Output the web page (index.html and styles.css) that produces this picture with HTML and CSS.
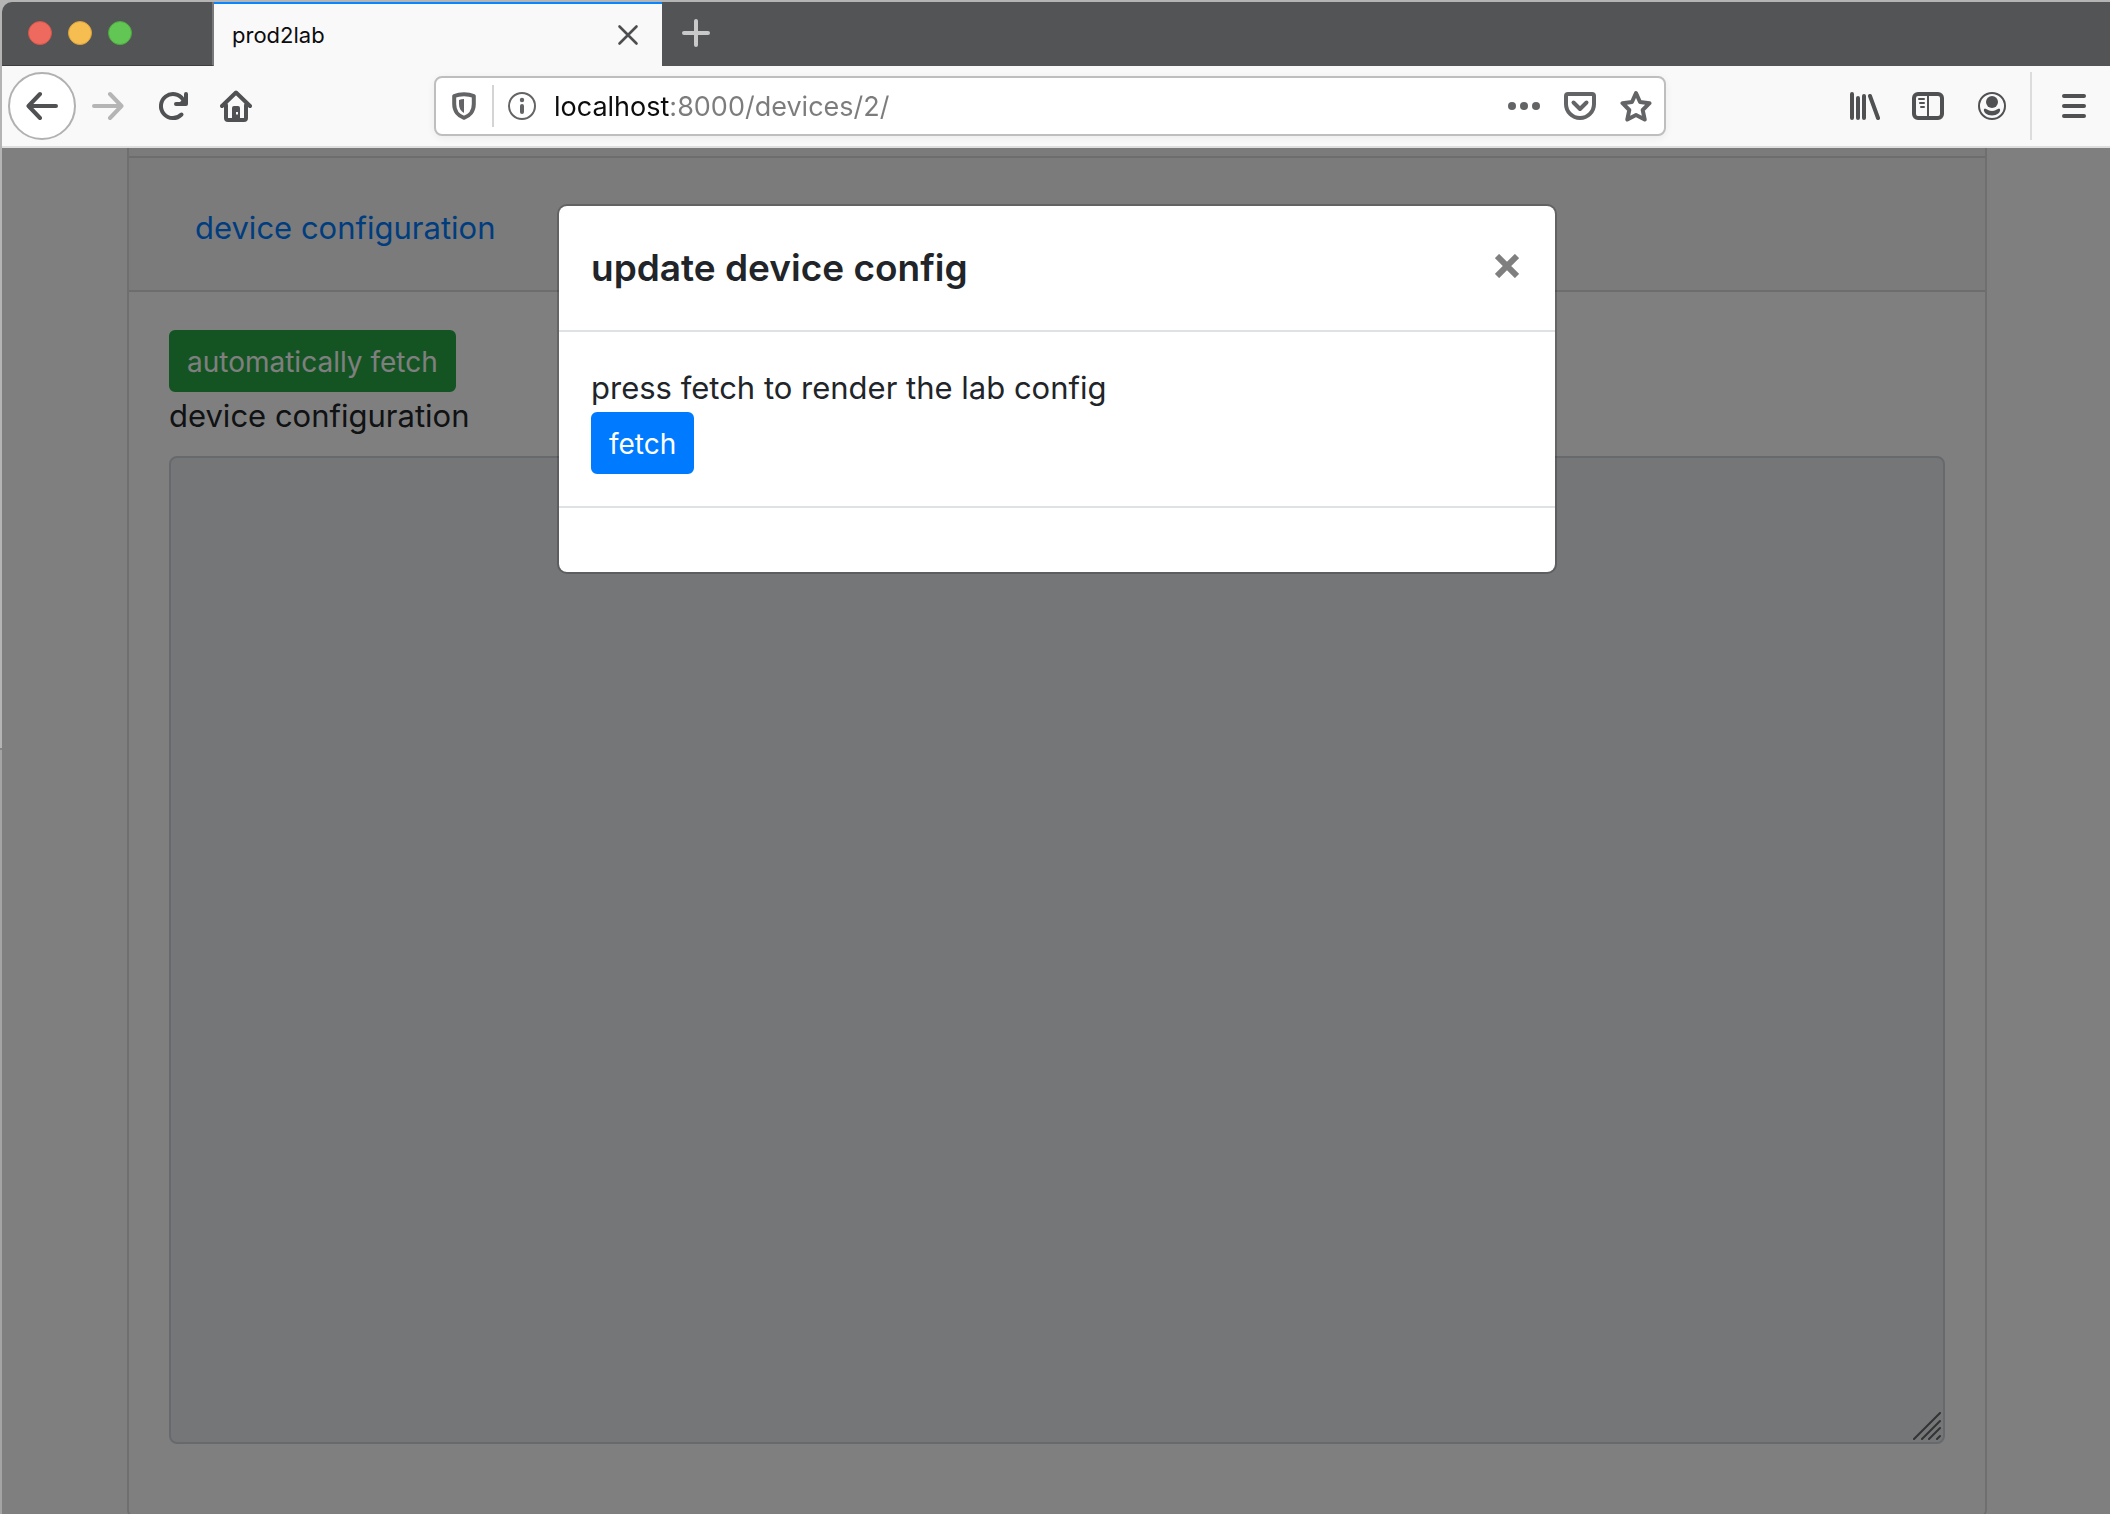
FILE: index.html
```html
<!DOCTYPE html>
<html lang="en">
<head>
<meta charset="utf-8">
<meta name="viewport" content="width=device-width, initial-scale=1">
<title>prod2lab</title>
<link rel="stylesheet" href="styles.css">
</head>
<body>
<div class="window">
  <header class="tabstrip">
    <div class="lights">
      <button class="light light-close" aria-label="Close window"></button>
      <button class="light light-min" aria-label="Minimize window"></button>
      <button class="light light-max" aria-label="Zoom window"></button>
    </div>
    <div class="tab">
      <span class="tab-title">prod2lab</span>
      <button class="icon-btn" aria-label="Close tab">
        <svg width="24" height="24" viewBox="0 0 24 24" fill="none" stroke="#4d4e50" stroke-width="2.6" stroke-linecap="round"><path d="M3.500 3.500l17 17M20.500 3.500l-17 17"/></svg>
      </button>
    </div>
    <button class="icon-btn new-tab" aria-label="New tab">
      <svg width="28" height="28" viewBox="0 0 28 28" fill="none" stroke="#c9c9ca" stroke-width="4" stroke-linecap="round"><path d="M14 2v24M2 14h24"/></svg>
    </button>
  </header>

  <nav class="toolbar">
    <button class="icon-btn back" aria-label="Back">
      <svg width="32" height="32" viewBox="0 0 32 32" fill="none" stroke="#505153" stroke-width="4" stroke-linecap="round" stroke-linejoin="round"><path d="M30 16H3M14 4L2.500 16L14 28"/></svg>
    </button>
    <div class="nav-icons">
      <button class="icon-btn" aria-label="Forward" disabled>
        <svg width="32" height="32" viewBox="0 0 32 32" fill="none" stroke="#b5b5b6" stroke-width="4" stroke-linecap="round" stroke-linejoin="round"><path d="M2 16h27M18 4l11.500 12L18 28"/></svg>
      </button>
      <button class="icon-btn" aria-label="Reload">
        <svg width="32" height="32" viewBox="0 0 32 32" fill="none" stroke="#505153" stroke-width="4" stroke-linecap="round" stroke-linejoin="round"><path d="M25.500 24.500A12 12 0 1 1 27 9.500"/><path d="M30 4v10H20"/><path d="M30 6v8h-8z" fill="#505153" stroke="none"/></svg>
      </button>
      <button class="icon-btn" aria-label="Home">
        <svg width="32" height="32" viewBox="0 0 32 32" fill="none" stroke="#505153" stroke-width="4" stroke-linecap="round" stroke-linejoin="round"><path d="M2 16L16 2.500L30 16"/><path d="M6 15v13q0 2 2 2h16q2 0 2-2V15"/><path fill="#505153" stroke="none" fill-rule="evenodd" d="M12 29V18q0-2 2-2h4q2 0 2 2v11zM16 22h2v2.500h-2z"/></svg>
      </button>
    </div>

    <div class="urlbar">
      <button class="icon-btn" aria-label="Tracking protection">
        <svg width="24" height="28" viewBox="0 0 24 28"><path d="M12 2.200C8.500 2.200 5 2.800 2.200 4v8c0 7 4 12 9.800 13.800C17.800 24 21.800 19 21.800 12V4C19 2.800 15.500 2.200 12 2.200z" fill="none" stroke="#636466" stroke-width="4" stroke-linejoin="round"/><path d="M12 7v14c-3.500-2-5-5-5-9V8c1.600-.6 3.300-1 5-1z" fill="#636466"/></svg>
      </button>
      <span class="url-sep"></span>
      <button class="icon-btn info" aria-label="Site information">
        <svg width="28" height="28" viewBox="0 0 28 28" fill="#636466"><circle cx="14" cy="14" r="13" fill="none" stroke="#636466" stroke-width="2"/><circle cx="14" cy="8" r="2.200"/><rect x="12" y="12" width="4" height="10" rx="2"/></svg>
      </button>
      <input class="url" type="text" aria-label="Address" value="localhost:8000/devices/2/">
      <div class="url-actions">
        <button class="icon-btn" aria-label="Page actions">
          <svg width="32" height="32" viewBox="0 0 32 32" fill="#636466"><circle cx="4" cy="16" r="4"/><circle cx="16" cy="16" r="4"/><circle cx="28" cy="16" r="4"/></svg>
        </button>
        <button class="icon-btn" aria-label="Save to Pocket">
          <svg width="32" height="32" viewBox="0 0 32 32" fill="none" stroke="#636466" stroke-width="4" stroke-linecap="round" stroke-linejoin="round"><path d="M4 4h24q2 0 2 2v8a14 14 0 0 1-28 0V6q0-2 2-2z"/><path d="M9.500 12.500L16 19l6.500-6.500"/></svg>
        </button>
        <button class="icon-btn" aria-label="Bookmark this page">
          <svg width="32" height="32" viewBox="0 0 32 32" fill="none" stroke="#636466" stroke-width="4" stroke-linejoin="round"><path d="M16 3l4 9 9.500 1.200-6.800 6.800 2 9.500L16 25l-8.700 4.500 2-9.500-6.800-6.800L12 12z"/></svg>
        </button>
      </div>
    </div>

    <div class="tool-icons">
      <button class="icon-btn" aria-label="Library">
        <svg width="32" height="32" viewBox="0 0 32 32" fill="none" stroke="#505153" stroke-width="4" stroke-linecap="round"><path d="M4 4v24M10 8v20M16 6v22M22 6l8 22"/></svg>
      </button>
      <button class="icon-btn" aria-label="Sidebars">
        <svg width="32" height="32" viewBox="0 0 32 32" fill="none" stroke="#505153"><rect x="2" y="4" width="28" height="24" rx="4" stroke-width="4"/><path d="M16 4v24M7 9h5M8 13h4M9 17h3" stroke-width="2" stroke-linecap="round"/></svg>
      </button>
      <button class="icon-btn" aria-label="Account">
        <svg width="32" height="32" viewBox="0 0 32 32" fill="#505153"><circle cx="16" cy="16" r="13" fill="none" stroke="#505153" stroke-width="2"/><circle cx="16" cy="12" r="6"/><path d="M8 19c1.500-.6 2.700.2 4 1 2.500 1.300 5.500 1.300 8 0 1.300-.8 2.500-1.600 4-1 1 3-3 6.500-8 6.500S7 22 8 19z"/></svg>
      </button>
    </div>
    <span class="tool-sep"></span>
    <button class="icon-btn menu" aria-label="Open menu">
      <svg width="24" height="28" viewBox="0 0 24 28" fill="none" stroke="#505153" stroke-width="4" stroke-linecap="round"><path d="M2 4h20M2 14h20M2 24h20"/></svg>
    </button>
  </nav>

  <div class="viewport">
    <main class="page">
      <section class="card">
        <div class="card-gap"></div>
        <div class="card-header"><a href="#config" class="card-link">device configuration</a></div>
        <div class="card-body">
          <button class="btn btn-success">automatically fetch</button>
          <label class="field-label" for="config">device configuration</label>
          <div class="field">
            <textarea id="config" class="textarea" rows="20" readonly></textarea>
            <svg class="grip" width="28" height="28" viewBox="0 0 28 28" fill="none" stroke="#666" stroke-width="2" stroke-linecap="round"><path d="M1 27L27 1M9 27L27 9M16 27L27 16M24 27l3-3"/></svg>
          </div>
        </div>
      </section>
    </main>
    <div class="backdrop">
      <div class="modal" role="dialog" aria-labelledby="modal-title">
        <div class="modal-header">
          <h5 class="modal-title" id="modal-title">update device config</h5>
          <button class="icon-btn" aria-label="Close">
            <svg width="24" height="24" viewBox="0 0 24 24" fill="none" stroke="#7f7f7f" stroke-width="6"><path d="M2 2l20 20M22 2L2 22"/></svg>
          </button>
        </div>
        <div class="modal-body">
          <p class="modal-text">press fetch to render the lab config</p>
          <button class="btn btn-primary">fetch</button>
        </div>
        <div class="modal-footer"></div>
      </div>
    </div>
  </div>
</div>
</body>
</html>
```
FILE: styles.css
```css
* { box-sizing: border-box; }

body {
  margin: 0;
  background: linear-gradient(#b4b4b4 748px, #858585 748px, #858585 750px, #a4a4a4 750px);
  color: #212529;
  font: 31px/48px Inter, "Liberation Sans", sans-serif;
}

button, input, textarea { font: inherit; color: inherit; }
svg { display: block; }

.window {
  display: flex;
  flex-direction: column;
  height: 100vh;
  padding: 2px 0 0 2px;
  overflow: hidden;
}

.icon-btn {
  display: flex;
  align-items: center;
  justify-content: center;
  flex: none;
  padding: 0;
  border: 0;
  background: none;
}

/* Tab strip */
.tabstrip {
  display: flex;
  flex: none;
  height: 64px;
  background: #535456;
  border-top-left-radius: 10px;
}
.lights {
  display: flex;
  gap: 16px;
  width: 212px;
  padding: 19px 26px;
  border-right: 2px solid #78797a;
  border-bottom: 1px solid #3e3e40;
}
.light {
  width: 24px;
  height: 24px;
  padding: 0;
  border: 1px solid;
  border-radius: 50%;
}
.light-close { background: #ee6a5f; border-color: #d5554b; }
.light-min { background: #f6be50; border-color: #d9a13b; }
.light-max { background: #62c655; border-color: #4fa73f; }
.tab {
  display: flex;
  align-items: center;
  justify-content: space-between;
  width: 448px;
  padding: 0 22px 0 18px;
  border-top: 2px solid #0a84ff;
  background: #f9f9fa;
}
.tab-title { color: #0c0c0d; font-size: 22px; line-height: 28px; }
.new-tab { padding: 0 20px 2px; }

/* Toolbar */
.toolbar {
  display: flex;
  align-items: center;
  flex: none;
  height: 82px;
  padding: 0 24px 0 6px;
  border-bottom: 2px solid #dededf;
  background: #f9f9fa;
}
.back {
  width: 68px;
  height: 68px;
  border: 2px solid #b1b1b1;
  border-radius: 50%;
  background: #fff;
}
.nav-icons, .tool-icons { display: flex; gap: 32px; }
.nav-icons { padding-left: 16px; }
.urlbar {
  display: flex;
  align-items: center;
  flex: 1;
  min-width: 0;
  height: 60px;
  margin: 0 182px;
  padding: 0 12px 0 16px;
  border: 2px solid #bebebf;
  border-radius: 8px;
  background: #fff;
  box-shadow: 0 2px 8px rgba(0, 0, 0, .06);
}
.url-sep { width: 2px; height: 42px; margin: 0 14px 0 16px; background: #d4d4d5; }
.url {
  flex: 1;
  min-width: 0;
  padding: 2px 0 0;
  margin-left: 18px;
  border: 0;
  outline: 0;
  background: linear-gradient(90deg, #0c0c0d 116px, #7c7c7d 116px);
  background-clip: text;
  -webkit-background-clip: text;
  color: transparent;
  font-size: 27px;
  line-height: 40px;
}
.url-actions { display: flex; gap: 24px; }
.tool-sep { width: 2px; height: 68px; margin: 0 30px 0 22px; background: #dcdcdd; }

/* Page */
.viewport {
  position: relative;
  flex: 1;
  min-height: 0;
  overflow: hidden;
  background: #fff;
}
.page { padding: 0 123px 0 125px; }
.card {
  border: 2px solid #dfdfdf;
  border-top: 0;
  border-bottom-right-radius: 8px;
  border-bottom-left-radius: 8px;
}
.card-gap { height: 8px; background: #f7f7f7; }
.card-header {
  padding: 46px 66px 38px;
  border: solid #dadada;
  border-width: 2px 0;
  background: #f7f7f7;
}
.card-link { color: #007bff; text-decoration: none; }
.card-body { padding: 38px 40px 72px; }
.btn {
  display: block;
  padding: 9px 16px 7px;
  border: 2px solid;
  border-radius: 6px;
  color: #fff;
  font-size: 28px;
  line-height: 42px;
}
.btn-success { background: #28a745; border-color: #28a745; }
.btn-primary { background: #007bff; border-color: #007bff; }
.field-label { display: block; margin-bottom: 16px; }
.field { position: relative; }
.textarea {
  display: block;
  width: 100%;
  padding: 12px 24px;
  border: 2px solid #ced4da;
  border-radius: 8px;
  outline: 0;
  background: #e9ecef;
  resize: none;
}
.grip { position: absolute; right: 4px; bottom: 4px; }

/* Modal */
.backdrop {
  position: absolute;
  inset: 0;
  padding: 56px 0 0 2px;
  background: rgba(0, 0, 0, .5);
}
.modal {
  max-width: 1000px;
  margin: 0 auto;
  border: 2px solid rgba(0, 0, 0, .2);
  border-radius: 10px;
  background: #fff;
  background-clip: padding-box;
}
.modal-header {
  display: flex;
  justify-content: space-between;
  align-items: flex-start;
  padding: 32px;
  border-bottom: 2px solid #dee2e6;
}
.modal-header .icon-btn { padding: 16px 4px; }
.modal-title { margin: 0; font-size: 37px; font-weight: 600; line-height: 60px; }
.modal-body { padding: 32px; }
.modal-text { margin: 0; }
.modal-footer { height: 66px; border-top: 2px solid #dee2e6; }
```
